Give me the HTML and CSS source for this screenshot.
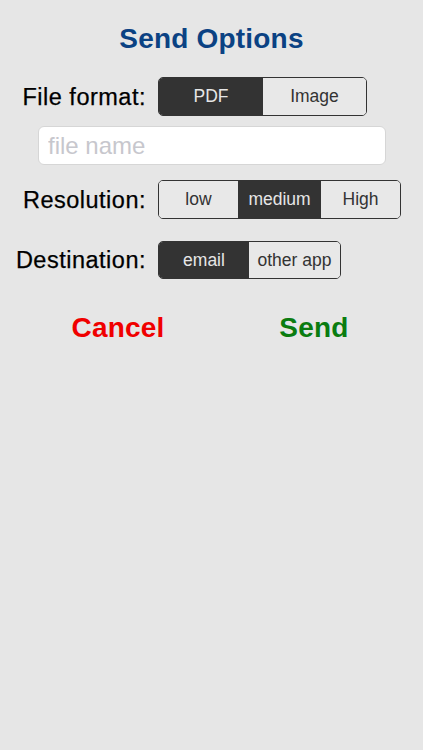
FILE: index.html
```html
<!DOCTYPE html>
<html>
<head>
<meta charset="utf-8">
<title>Send Options</title>
<link rel="stylesheet" href="styles.css">
</head>
<body>
<div class="page">
  <h1 class="title">Send Options</h1>

  <div class="row">
    <span class="label">File format:</span>
    <div class="seg">
      <span class="opt on w-pdf">PDF</span>
      <span class="opt w-image">Image</span>
    </div>
  </div>

  <div class="field">
    <input class="name-input" type="text" placeholder="file name">
  </div>

  <div class="row row-res">
    <span class="label">Resolution:</span>
    <div class="seg">
      <span class="opt w-low">low</span>
      <span class="opt on w-medium">medium</span>
      <span class="opt w-high">High</span>
    </div>
  </div>

  <div class="row row-dest">
    <span class="label">Destination:</span>
    <div class="seg seg-short">
      <span class="opt on w-email">email</span>
      <span class="opt w-other">other app</span>
    </div>
  </div>

  <div class="actions">
    <span class="btn cancel">Cancel</span>
    <span class="btn send">Send</span>
  </div>
</div>
</body>
</html>
```

FILE: styles.css
```css
html, body {
  margin: 0;
  padding: 0;
  background: #e6e6e6;
}

body {
  font-family: "Liberation Sans", Arial, Helvetica, sans-serif;
  width: 423px;
  height: 750px;
  overflow: hidden;
}

.page {
  padding-top: 22px;
}

.title {
  margin: 0 0 21px 0;
  text-align: center;
  font-size: 28px;
  line-height: 34px;
  font-weight: bold;
  letter-spacing: 0.2px;
  color: #0b4283;
}

.row {
  display: grid;
  grid-template-columns: 146px auto;
  column-gap: 12px;
  align-items: center;
  justify-content: start;
}

.label {
  text-align: right;
  font-size: 23.5px;
  line-height: 28px;
  letter-spacing: 0.5px;
  color: #000;
  white-space: nowrap;
  -webkit-text-stroke: 0.25px #000;
}

.seg {
  display: flex;
  height: 39px;
  box-sizing: border-box;
  border: 1.5px solid #333;
  border-radius: 5px;
  overflow: hidden;
}

.seg-short {
  height: 38px;
}

.opt {
  display: flex;
  align-items: center;
  justify-content: center;
  font-size: 17.5px;
  color: #333;
  background: #e8e8e8;
  white-space: nowrap;
}

.opt.on {
  background: #333333;
  color: #e6e6e6;
}

.w-pdf { width: 104px; }
.w-image { width: 103px; }
.w-low { width: 79px; }
.w-medium { width: 83px; }
.w-high { width: 79px; }
.w-email { width: 90px; }
.w-other { width: 91px; }

.field {
  margin: 10px 0 0 38px;
  width: 348px;
}

.name-input {
  display: block;
  box-sizing: border-box;
  width: 348px;
  height: 39px;
  margin: 0;
  padding: 0 0 0 9px;
  border: 1px solid #d6d6d6;
  border-radius: 6px;
  background: #fff;
  font-family: "Liberation Sans", Arial, Helvetica, sans-serif;
  font-size: 24px;
  color: #000;
  outline: none;
}

.name-input::placeholder {
  color: #c7c7cd;
}

.row-res {
  margin-top: 15px;
}

.row-dest {
  margin-top: 22px;
}

.actions {
  display: flex;
  margin: 32px 0 0 20px;
}

.btn {
  width: 196px;
  text-align: center;
  font-size: 28px;
  line-height: 34px;
  font-weight: bold;
  letter-spacing: 0.2px;
}

.cancel {
  color: #f00000;
}

.send {
  color: #0a7c10;
}
```
